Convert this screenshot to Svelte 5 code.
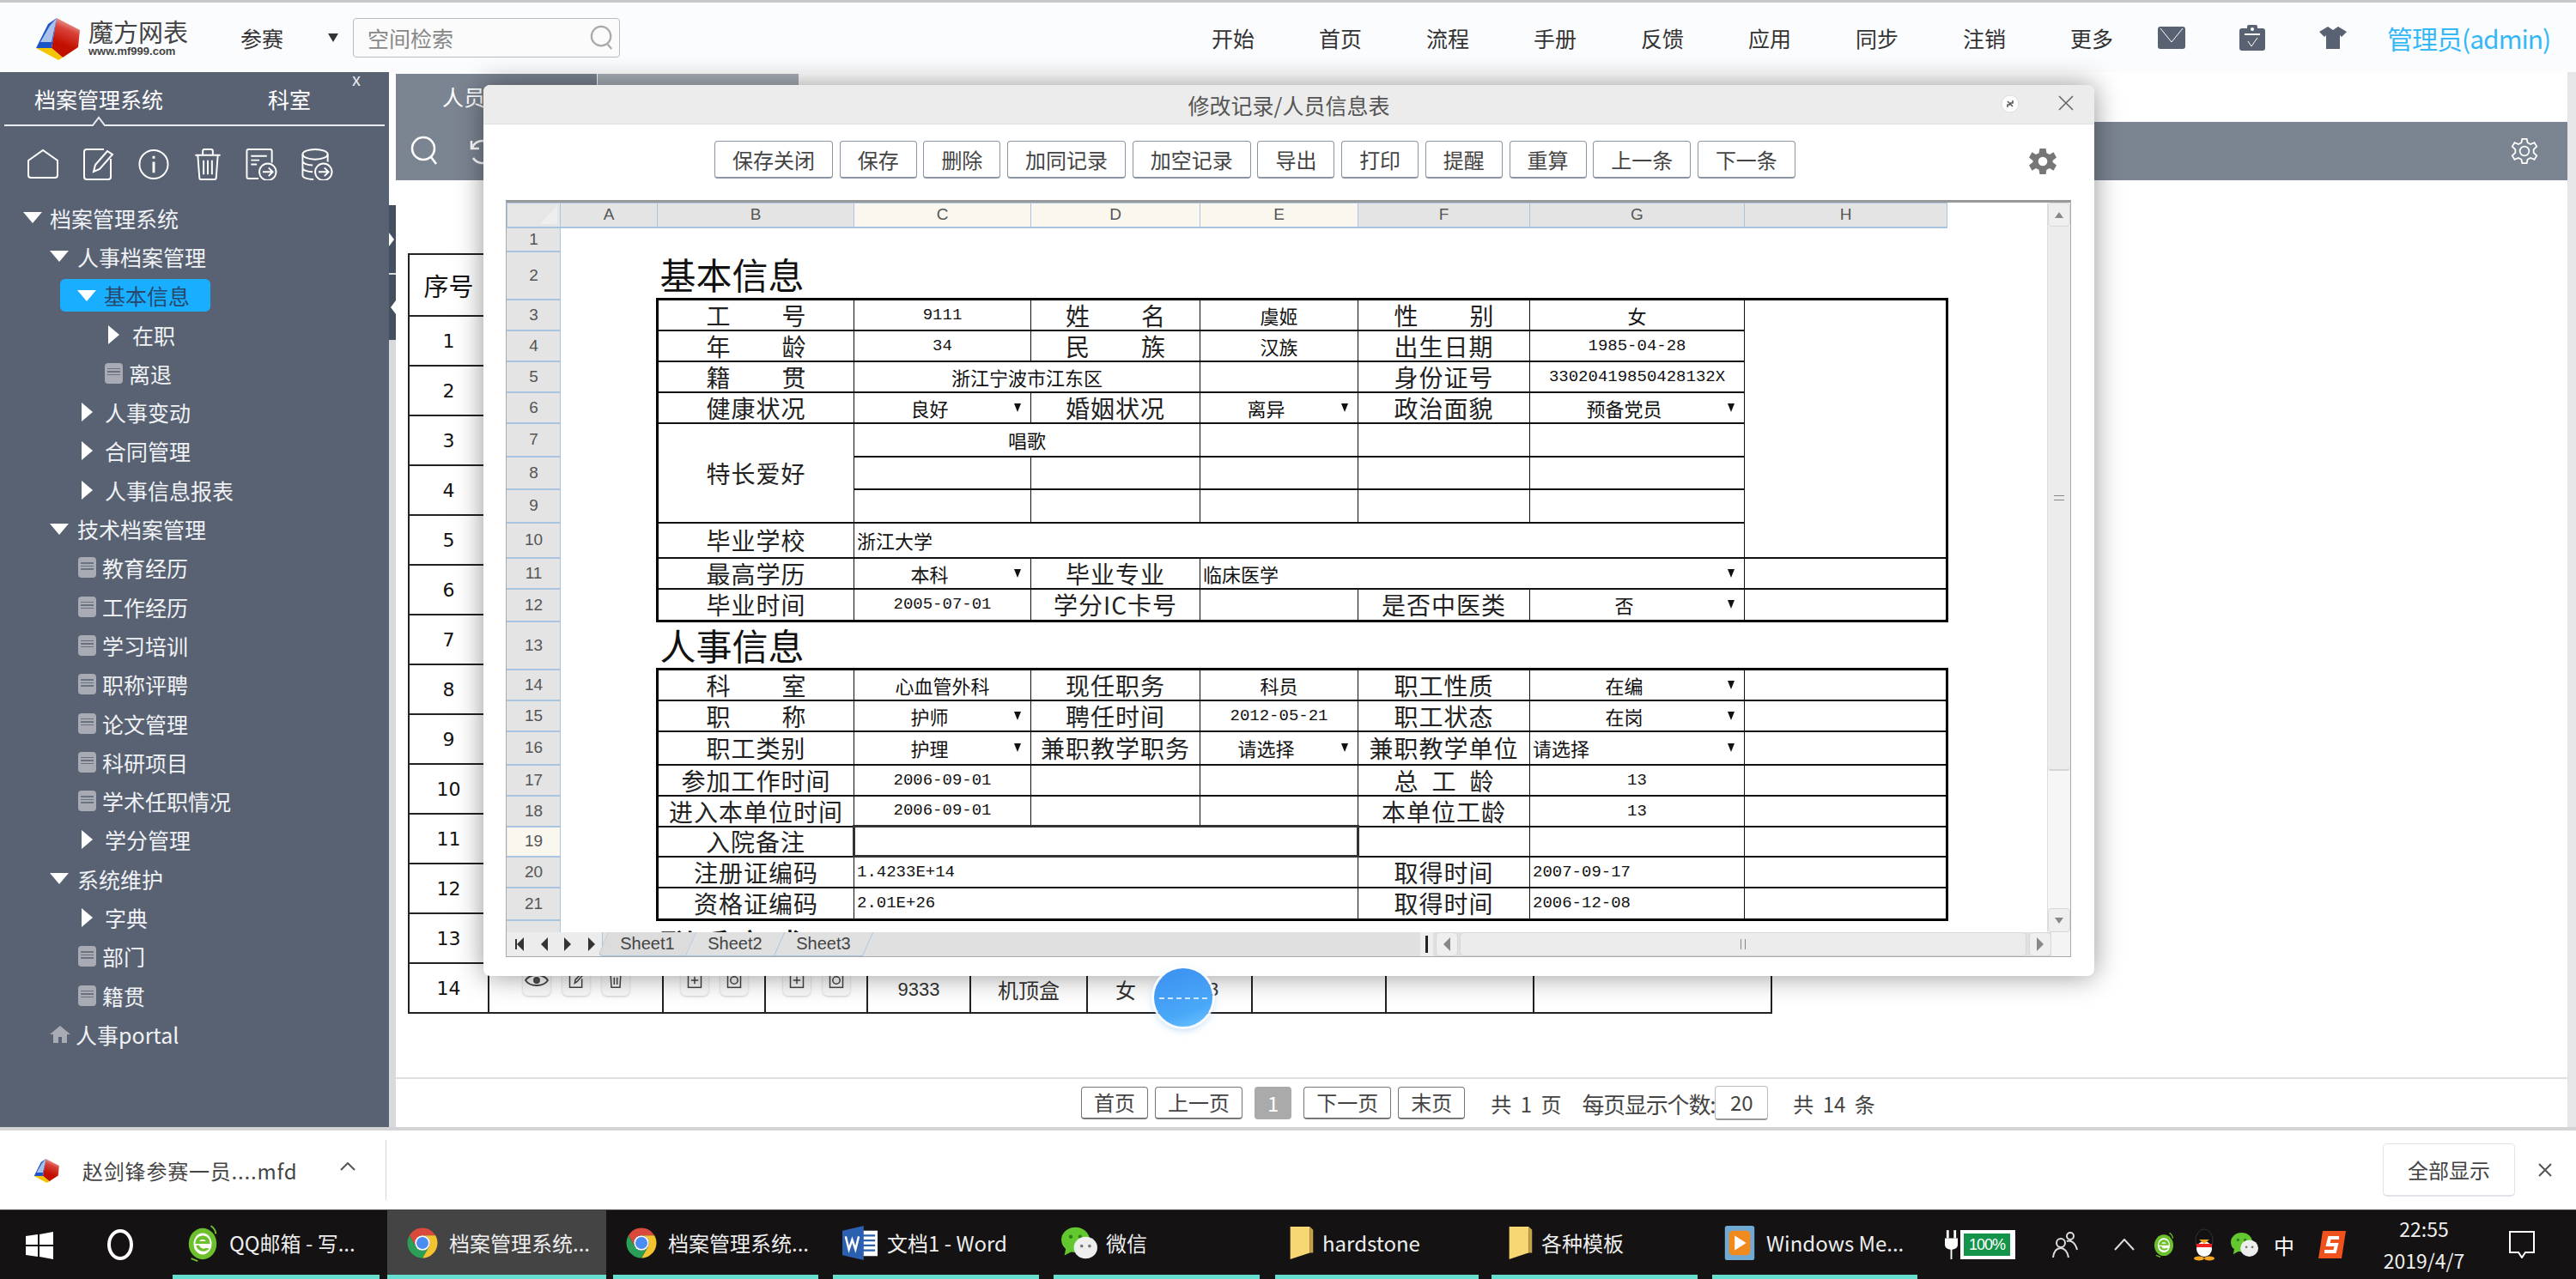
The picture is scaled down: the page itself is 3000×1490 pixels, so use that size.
<script>
  const navItems = ['开始', '首页', '流程', '手册', '反馈', '应用', '同步', '注销', '更多'];

  // pad = where the row's icon starts, gap = space between icon and text
  const tree = [
    { t: '档案管理系统', icon: 'down', pad: 27, gap: 9 },
    { t: '人事档案管理', icon: 'down', pad: 58, gap: 10 },
    { t: '基本信息', icon: 'down', pad: 20, gap: 9, active: true },
    { t: '在职', icon: 'right', pad: 126, gap: 15 },
    { t: '离退', icon: 'doc', pad: 122, gap: 7 },
    { t: '人事变动', icon: 'right', pad: 95, gap: 14 },
    { t: '合同管理', icon: 'right', pad: 95, gap: 14 },
    { t: '人事信息报表', icon: 'right', pad: 95, gap: 14 },
    { t: '技术档案管理', icon: 'down', pad: 58, gap: 10 },
    { t: '教育经历', icon: 'doc', pad: 91, gap: 7 },
    { t: '工作经历', icon: 'doc', pad: 91, gap: 7 },
    { t: '学习培训', icon: 'doc', pad: 91, gap: 7 },
    { t: '职称评聘', icon: 'doc', pad: 91, gap: 7 },
    { t: '论文管理', icon: 'doc', pad: 91, gap: 7 },
    { t: '科研项目', icon: 'doc', pad: 91, gap: 7 },
    { t: '学术任职情况', icon: 'doc', pad: 91, gap: 7 },
    { t: '学分管理', icon: 'right', pad: 95, gap: 14 },
    { t: '系统维护', icon: 'down', pad: 58, gap: 10 },
    { t: '字典', icon: 'right', pad: 95, gap: 14 },
    { t: '部门', icon: 'doc', pad: 91, gap: 7 },
    { t: '籍贯', icon: 'doc', pad: 91, gap: 7 },
    { t: '人事portal', icon: 'home', pad: 58, gap: 6 }
  ];

  const toolButtons = ['保存关闭', '保存', '删除', '加同记录', '加空记录', '导出', '打印', '提醒', '重算', '上一条', '下一条'];

  const columns = [
    { l: 'A', w: 113 }, { l: 'B', w: 229 }, { l: 'C', w: 206, on: true }, { l: 'D', w: 197, on: true },
    { l: 'E', w: 184, on: true }, { l: 'F', w: 200 }, { l: 'G', w: 250 }, { l: 'H', w: 236 }
  ];

  // sheet cell helpers
  const L = (t, o = {}) => ({ t, k: 'label', ...o });
  const S = (t, o = {}) => ({ t, k: 'label', spread: true, ...o });
  const V = (t, o = {}) => ({ t, k: 'value', ...o });
  const N = (t, o = {}) => ({ t, k: 'num', ...o });
  const E = (o = {}) => ({ t: '', k: 'value', ...o });
  const H = (o = {}) => ({ t: '', k: 'value', h: true, ...o });

  const sheetRows = [
    { n: 3, h: 36, edge: 'top', cells: [S('工 号', { first: true }), N('9111'), S('姓 名'), V('虞姬'), S('性 别'), V('女'), H({ rs: 8 })] },
    { n: 4, h: 36, cells: [S('年 龄', { first: true }), N('34'), S('民 族'), V('汉族'), L('出生日期'), N('1985-04-28')] },
    { n: 5, h: 36, cells: [S('籍 贯', { first: true }), V('浙江宁波市江东区', { cs: 2 }), E(), L('身份证号'), N('33020419850428132X')] },
    { n: 6, h: 36, cells: [L('健康状况', { first: true }), V('良好', { dd: true }), L('婚姻状况'), V('离异', { dd: true }), L('政治面貌'), V('预备党员', { dd: true })] },
    { n: 7, h: 39, cells: [L('特长爱好', { rs: 3, first: true }), V('唱歌', { cs: 2 }), E(), E(), E()] },
    { n: 8, h: 38, cells: [E(), E(), E(), E(), E()] },
    { n: 9, h: 39, cells: [E(), E(), E(), E(), E()] },
    { n: 10, h: 41, cells: [L('毕业学校', { first: true }), V('浙江大学', { cs: 5, left: true })] },
    { n: 11, h: 36, cells: [L('最高学历', { first: true }), V('本科', { dd: true }), L('毕业专业'), V('临床医学', { cs: 3, left: true, dd: true }), H()] },
    { n: 12, h: 38, edge: 'bot', cells: [L('毕业时间', { first: true }), N('2005-07-01'), L('学分IC卡号'), E(), L('是否中医类'), V('否', { dd: true }), H()] },
    { n: 14, h: 36, edge: 'top', cells: [S('科 室', { first: true }), V('心血管外科'), L('现任职务'), V('科员'), L('职工性质'), V('在编', { dd: true }), H()] },
    { n: 15, h: 36, cells: [S('职 称', { first: true }), V('护师', { dd: true }), L('聘任时间'), N('2012-05-21'), L('职工状态'), V('在岗', { dd: true }), H()] },
    { n: 16, h: 39, cells: [L('职工类别', { first: true }), V('护理', { dd: true }), L('兼职教学职务'), V('请选择', { dd: true }), L('兼职教学单位'), V('请选择', { dd: true, left: true }), H()] },
    { n: 17, h: 36, cells: [L('参加工作时间', { first: true }), N('2006-09-01'), E(), E(), S('总 工 龄'), N('13'), H()] },
    { n: 18, h: 36, cells: [L('进入本单位时间', { first: true }), N('2006-09-01'), E(), E(), L('本单位工龄'), N('13'), H()] },
    { n: 19, h: 35, on: true, cells: [L('入院备注', { first: true }), E({ cs: 3, sel: true }), E(), E(), H()] },
    { n: 20, h: 36, cells: [L('注册证编码', { first: true }), N('1.4233E+14', { cs: 3, left: true }), L('取得时间'), N('2007-09-17', { left: true }), H()] },
    { n: 21, h: 38, edge: 'bot', cells: [L('资格证编码', { first: true }), N('2.01E+26', { cs: 3, left: true }), L('取得时间'), N('2006-12-08', { left: true }), H()] }
  ];

  const allRows = [
    { n: 1, h: 28, blank: true },
    { n: 2, h: 56, heading: '基本信息' },
    ...sheetRows.slice(0, 10),
    { n: 13, h: 56, heading: '人事信息' },
    ...sheetRows.slice(10),
    { n: 22, h: 40, heading: '联系方式', low: true }
  ];

  const tableCols = [93, 203, 119, 119, 120, 136, 90, 102, 156, 172, 277];
  const rowNumbers = Array.from({ length: 13 }, (_, i) => i + 1);

  const taskItems = [
    { t: 'QQ邮箱 - 写...', icon: 'ie', w: 241, m: 0, pad: 14 },
    { t: '档案管理系统...', icon: 'chrome', w: 255, m: 9, pad: 20, active: true },
    { t: '档案管理系统...', icon: 'chrome', w: 239, m: 8, pad: 12 },
    { t: '文档1 - Word', icon: 'word', w: 240, m: 17, pad: 11 },
    { t: '微信', icon: 'wechat', w: 240, m: 17, pad: 9 },
    { t: 'hardstone', icon: 'folder', w: 237, m: 18, pad: 15 },
    { t: '各种模板', icon: 'folder', w: 240, m: 15, pad: 18 },
    { t: 'Windows Me...', icon: 'wmp', w: 239, m: 17, pad: 11 }
  ];
</script>

{#snippet logo()}
  <svg viewBox="0 0 52 49" width="100%" height="100%">
    <defs>
      <linearGradient id="lg" x1="0.7" y1="0" x2="0.5" y2="0.7">
        <stop offset="0" stop-color="#f3c9c4" />
        <stop offset="0.45" stop-color="#d9433a" />
        <stop offset="1" stop-color="#c21000" />
      </linearGradient>
    </defs>
    <polygon points="25,0 52,14 50,34 32,46 19,35" fill="url(#lg)" />
    <polygon points="25,0 15,7 1,35 19,35" fill="#1d55c8" />
    <polygon points="25,0 17,9 6,28 19,28" fill="#dbe6f4" opacity="0.75" />
    <polygon points="1,35 19,35 32,46 27,49" fill="#f2c500" />
  </svg>
{/snippet}

{#snippet chrome()}
  <svg viewBox="0 0 48 48" class="ti">
    <path d="M6.68 14A20 20 0 0 1 41.32 14H24A10 10 0 0 0 15.34 29Z" fill="#d9493c" />
    <path d="M41.32 14A20 20 0 0 1 24 44L32.66 29A10 10 0 0 0 24 14Z" fill="#f4c430" />
    <path d="M24 44A20 20 0 0 1 6.68 14L15.34 29A10 10 0 0 0 32.66 29Z" fill="#2b9e57" />
    <circle cx="24" cy="24" r="10" fill="#fff" />
    <circle cx="24" cy="24" r="8" fill="#4a8cf0" />
  </svg>
{/snippet}

{#snippet ie(size)}
  <svg viewBox="0 0 40 46" class={size}>
    <ellipse cx="20" cy="24" rx="17" ry="19" fill="#6cc02c" />
    <ellipse cx="20" cy="24" rx="11" ry="13" fill="#fff" />
    <path d="M11 24H29C29 16 24 14 20 14C15 14 11 18 11 24ZM16 21C17 18 23 18 24 21Z" fill="#6cc02c" fill-rule="evenodd" />
    <path d="M12 26C13 33 22 36 28 30L24 29C21 31 17 30 16 26Z" fill="#6cc02c" />
    <path d="M30 2C34 5 36 8 36 12M6 42L14 45" stroke="#6cc02c" stroke-width="2" fill="none" />
  </svg>
{/snippet}

{#snippet word()}
  <svg viewBox="0 0 44 42" class="ti">
    <rect x="20" y="6" width="23" height="31" fill="#fff" />
    <path d="M24 12H40M24 18H40M24 24H40M24 30H40" stroke="#2b5fb0" stroke-width="2.5" />
    <polygon points="0,6 26,0 26,42 0,36" fill="#2b5fb0" />
    <path d="M4 13L8 29L12 17L16 29L20 13" stroke="#fff" stroke-width="2.6" fill="none" />
  </svg>
{/snippet}

{#snippet wechat(size)}
  <svg viewBox="0 0 46 42" class={size}>
    <ellipse cx="18" cy="17" rx="18" ry="16" fill="#63c72f" />
    <path d="M6 27L4 37L15 31Z" fill="#63c72f" />
    <circle cx="12" cy="13" r="2.4" fill="#2e7d18" />
    <circle cx="24" cy="13" r="2.4" fill="#2e7d18" />
    <ellipse cx="31" cy="27" rx="15" ry="14" fill="#eee" />
    <circle cx="26" cy="25" r="2" fill="#777" />
    <circle cx="36" cy="25" r="2" fill="#777" />
  </svg>
{/snippet}

{#snippet folder()}
  <svg viewBox="0 0 30 40" class="ti folder">
    <polygon points="2,0 26,0 26,32 2,40" fill="#f7d774" />
    <polygon points="26,0 30,4 30,32 26,32" fill="#c8a24a" />
  </svg>
{/snippet}

{#snippet wmp()}
  <svg viewBox="0 0 40 46" class="ti">
    <rect x="2" y="2" width="36" height="42" rx="3" fill="#6fa9d4" />
    <rect x="7" y="8" width="26" height="30" rx="5" fill="#f08a1d" />
    <polygon points="14,14 28,23 14,32" fill="#fff" />
  </svg>
{/snippet}

{#snippet arrowDoc()}
  <circle cx="27" cy="28" r="10" />
  <path d="M21 28H33M28 23L33 28L28 33" />
{/snippet}

<div class="page">
  <header class="topbar">
    <div class="logo">{@render logo()}</div>
    <div class="brand">
      <div class="brand-name">魔方网表</div>
      <div class="brand-url">www.mf999.com</div>
    </div>
    <div class="space-select">参赛</div>
    <div class="tri-small"></div>
    <div class="search">
      <span>空间检索</span>
      <svg viewBox="0 0 30 32" width="28" height="30" fill="none" stroke="#aaa" stroke-width="2.4">
        <circle cx="14" cy="14" r="12" /><path d="M22 24L27 30" />
      </svg>
    </div>
    <nav class="nav">
      {#each navItems as item}
        <span class="nav-item">{item}</span>
      {/each}
    </nav>
    <div class="top-icons">
      <svg viewBox="0 0 32 26" width="32" height="26">
        <rect width="32" height="26" rx="3" fill="#596273" />
        <path d="M3 2L16 18L29 2" stroke="#fff" stroke-width="1" fill="none" />
      </svg>
      <svg viewBox="0 0 30 30" width="30" height="30">
        <rect y="4" width="30" height="26" rx="3" fill="#596273" />
        <rect x="9" y="0" width="12" height="9" rx="2" fill="#596273" />
        <circle cx="15" cy="5" r="2" fill="#fff" />
        <rect x="6" y="10" width="18" height="2" fill="#fff" />
        <path d="M10 19L14 25L21 15" stroke="#fff" stroke-width="1" fill="none" />
      </svg>
      <svg viewBox="0 0 32 26" width="32" height="26">
        <path d="M10 0L16 4L22 0L32 6L26 12L24 10V26H8V10L6 12L0 6Z" fill="#596273" />
      </svg>
    </div>
    <a class="admin" href="#top">管理员(admin)</a>
  </header>

  <main class="main">
    <aside class="sidebar">
      <span class="side-close">x</span>
      <div class="side-tabs">
        <span class="side-tab first">档案管理系统</span>
        <span class="side-tab second">科室</span>
      </div>
      <svg class="side-rule" viewBox="0 0 443 12" width="443" height="12" fill="none" stroke="#e8ebf0" stroke-width="2">
        <path d="M0 11H103L110 2L117 11H443" />
      </svg>
      <div class="side-icons">
        <svg viewBox="0 0 38 36" width="38" height="36"><path d="M2 14L19 2L36 14V31a3 3 0 0 1-3 3H5a3 3 0 0 1-3-3Z" /></svg>
        <svg viewBox="0 0 38 37" width="38" height="37">
          <path d="M33 12V33a3 3 0 0 1-3 3H5a3 3 0 0 1-3-3V4a3 3 0 0 1 3-3H25" />
          <path d="M13 27L15 19L29 3L35 7L20 24Z" />
        </svg>
        <svg viewBox="0 0 38 38" width="38" height="37">
          <circle cx="19" cy="19" r="17" /><path d="M19 16V29M19 9V12" stroke-width="3" />
        </svg>
        <svg viewBox="0 0 34 38" width="34" height="37">
          <path d="M2 8H32M11 7V3a2 2 0 0 1 2-2H21a2 2 0 0 1 2 2V7M5 8L7 35a2 2 0 0 0 2 2H25a2 2 0 0 0 2-2L29 8M12 14V31M17 14V31M22 14V31" />
        </svg>
        <svg viewBox="0 0 38 38" width="38" height="37">
          <path d="M16 36H4a2 2 0 0 1-2-2V3a2 2 0 0 1 2-2H30a2 2 0 0 1 2 2V17M7 9H26M7 14H17M7 19H14" />
          {@render arrowDoc()}
        </svg>
        <svg viewBox="0 0 38 38" width="38" height="37">
          <ellipse cx="17" cy="7" rx="15" ry="6" />
          <path d="M2 7V32C2 35 8 37 15 37M32 7V16M2 15C2 18 8 20 14 20M2 23C2 26 8 28 14 28" />
          {@render arrowDoc()}
        </svg>
      </div>
      <ul class="tree">
        {#each tree as row}
          <li class="tree-row" class:active={row.active}>
            <div class="tree-inner" style:padding-left="{row.pad}px">
              {#if row.icon === 'down'}
                <i class="tri-down"></i>
              {:else if row.icon === 'right'}
                <i class="tri-right"></i>
              {:else if row.icon === 'doc'}
                <i class="doc"><b></b><b></b><b></b></i>
              {:else}
                <svg class="home" viewBox="0 0 24 20" width="24" height="20">
                  <path d="M12 0L24 10H20V20H14V13H10V20H4V10H0Z" fill="#a8abb3" />
                </svg>
              {/if}
              <span style:margin-left="{row.gap}px">{row.t}</span>
            </div>
          </li>
        {/each}
      </ul>
    </aside>

    <div class="splitter">
      <div class="split-blank"></div>
      <div class="split-handle"><i class="split-r"></i></div>
      <div class="split-handle lower"><i class="split-l"></i></div>
    </div>

    <section class="content">
      <div class="tabs">
        <div class="tab">人员信息表</div>
        <div class="tab dim"></div>
      </div>
      <div class="list-toolbar">
        <svg viewBox="0 0 36 36" width="36" height="36" fill="none" stroke="#fff" stroke-width="2.6">
          <circle cx="16" cy="15" r="13" /><path d="M25 25L31 33" />
        </svg>
        <svg viewBox="0 0 36 36" width="36" height="36" fill="none" stroke="#fff" stroke-width="2.6">
          <path d="M6 6V15H15M7 14A13 13 0 1 1 8 26" />
        </svg>
        <svg class="list-gear" viewBox="0 0 36 36" width="32" height="34" fill="none" stroke="#fff" stroke-width="2">
          <path d="M15 2H21L22 7L26 9L31 7L34 12L30 16V20L34 24L31 29L26 27L22 29L21 34H15L14 29L10 27L5 29L2 24L6 20V16L2 12L5 7L10 9L14 7Z" />
          <circle cx="18" cy="18" r="6" />
        </svg>
      </div>
      <div class="list-area">
        <table class="data-table">
          <colgroup>
            {#each tableCols as w}<col style:width="{w}px" />{/each}
          </colgroup>
          <tbody>
            <tr class="head-row"><th>序号</th><th colspan="10"></th></tr>
            {#each rowNumbers as n}
              <tr class="data-row"><td>{n}</td><td colspan="10"></td></tr>
            {/each}
            <tr class="data-row last">
              <td>14</td>
              <td>
                <div class="ops">
                  <span class="op"><svg viewBox="0 0 28 20" width="28" height="20"><path d="M1 10C6 2 22 2 27 10C22 18 6 18 1 10Z" /><circle cx="14" cy="10" r="3" fill="#555" /></svg></span>
                  <span class="op"><svg viewBox="0 0 24 24" width="20" height="22"><path d="M20 10V22H3V3H12M10 16L11 11L20 2L22 4L13 14Z" /></svg></span>
                  <span class="op"><svg viewBox="0 0 24 24" width="20" height="22"><path d="M2 4H22M5 4L6 22H18L19 4M10 8V18M14 8V18" /></svg></span>
                </div>
              </td>
              <td>
                <div class="ops">
                  <span class="op"><svg viewBox="0 0 24 24" width="20" height="22"><rect x="3" y="2" width="18" height="20" /><path d="M12 7V17M7 12H17" /></svg></span>
                  <span class="op"><svg viewBox="0 0 24 24" width="20" height="22"><rect x="3" y="2" width="18" height="20" /><circle cx="12" cy="12" r="5" /></svg></span>
                </div>
              </td>
              <td>
                <div class="ops">
                  <span class="op"><svg viewBox="0 0 24 24" width="20" height="22"><rect x="3" y="2" width="18" height="20" /><path d="M12 7V17M7 12H17" /></svg></span>
                  <span class="op"><svg viewBox="0 0 24 24" width="20" height="22"><rect x="3" y="2" width="18" height="20" /><circle cx="12" cy="12" r="5" /></svg></span>
                </div>
              </td>
              <td class="cell-text digits">9333</td>
              <td class="cell-text">机顶盒</td>
              <td class="cell-text">女</td>
              <td class="cell-text digits">33</td>
              <td></td>
              <td></td>
              <td></td>
            </tr>
          </tbody>
        </table>
      </div>
      <div class="pager">
        <span class="pg">首页</span>
        <span class="pg">上一页</span>
        <span class="pg current">1</span>
        <span class="pg">下一页</span>
        <span class="pg">末页</span>
        <span class="pg-text first">共 1 页</span>
        <span class="pg-text second">每页显示个数:</span>
        <span class="pg-input">20</span>
        <span class="pg-text third">共 14 条</span>
      </div>
    </section>
    <div class="right-strip"></div>
  </main>

  <div class="downloads">
    <div class="dl-logo">{@render logo()}</div>
    <span class="dl-name">赵剑锋参赛一员....mfd</span>
    <svg class="dl-caret" viewBox="0 0 18 10" width="18" height="10" fill="none" stroke="#555" stroke-width="2"><path d="M1 9L9 1L17 9" /></svg>
    <div class="dl-sep"></div>
    <button class="dl-all">全部显示</button>
    <svg class="dl-close" viewBox="0 0 16 16" width="16" height="16" stroke="#555" stroke-width="2"><path d="M1 1L15 15M15 1L1 15" /></svg>
  </div>

  <footer class="taskbar">
    <svg class="win" viewBox="0 0 32 32" width="32" height="32" fill="#fff">
      <polygon points="0,5 14,3 14,15 0,15" /><polygon points="16,3 32,0 32,15 16,15" />
      <polygon points="0,17 14,17 14,29 0,27" /><polygon points="16,17 32,17 32,32 16,29" />
    </svg>
    <div class="cortana"></div>
    {#each taskItems as item}
      <div class="task" class:active={item.active} style:width="{item.w}px" style:margin-left="{item.m}px" style:padding-left="{item.pad}px">
        {#if item.icon === 'chrome'}{@render chrome()}
        {:else if item.icon === 'ie'}{@render ie('ti')}
        {:else if item.icon === 'word'}{@render word()}
        {:else if item.icon === 'wechat'}{@render wechat('ti')}
        {:else if item.icon === 'folder'}{@render folder()}
        {:else}{@render wmp()}{/if}
        <span>{item.t}</span>
      </div>
    {/each}
    <div class="tray">
      <svg class="t-plug" viewBox="0 0 16 36" width="15" height="36" fill="#fff">
        <rect x="2" y="0" width="3" height="10" /><rect x="11" y="0" width="3" height="10" />
        <path d="M0 10H16V18C16 22 12 24 9 24V36H7V24C4 24 0 22 0 18Z" />
      </svg>
      <div class="t-bat"><span>100%</span></div>
      <svg class="t-people" viewBox="0 0 30 32" width="30" height="32" fill="none" stroke="#ddd" stroke-width="2">
        <circle cx="10" cy="14" r="5" /><circle cx="21" cy="6" r="4" />
        <path d="M1 31C2 23 6 20 10 20C14 20 18 24 19 31M17 12C22 10 27 14 29 22" />
      </svg>
      <svg class="t-caret" viewBox="0 0 24 14" width="24" height="14" fill="none" stroke="#ddd" stroke-width="2"><path d="M1 13L12 1L23 13" /></svg>
      <div class="t-e">{@render ie('tray-i')}</div>
      <svg class="t-qq" viewBox="0 0 28 38" width="28" height="38">
        <ellipse cx="14" cy="14" rx="10" ry="13" fill="#111" stroke="#333" />
        <ellipse cx="14" cy="24" rx="9" ry="9" fill="#fff" />
        <rect x="5" y="18" width="18" height="4" fill="#e22" />
        <path d="M8 13H20L14 18Z" fill="#f5a623" />
        <ellipse cx="8" cy="35" rx="6" ry="2.5" fill="#f5a623" /><ellipse cx="20" cy="35" rx="6" ry="2.5" fill="#f5a623" />
      </svg>
      <div class="t-wx">{@render wechat('tray-i')}</div>
      <span class="t-ime">中</span>
      <svg class="t-sogou" viewBox="0 0 32 32" width="32" height="32">
        <path d="M5 0H32L27 32H0Z" fill="#f0521e" />
        <path d="M24 8H13L11 16H21L19 24H7" stroke="#fff" stroke-width="4" fill="none" />
      </svg>
      <div class="t-clock"><span>22:55</span><span>2019/4/7</span></div>
      <svg class="t-note" viewBox="0 0 32 32" width="32" height="32" fill="none" stroke="#fff" stroke-width="2"><path d="M2 1H30V25H20L16 31L12 25H2Z" /></svg>
    </div>
  </footer>

  <div class="modal">
    <div class="modal-head">
      <span class="modal-title">修改记录/人员信息表</span>
      <svg class="modal-restore" viewBox="0 0 22 22" width="22" height="22">
        <circle cx="11" cy="11" r="10" fill="#fff" stroke="#ddd" />
        <path d="M8 8L14 14M14 7V10H11M8 15V12H11" stroke="#555" stroke-width="1.5" fill="none" />
      </svg>
      <svg class="modal-x" viewBox="0 0 18 18" width="18" height="18" stroke="#666" stroke-width="1.6"><path d="M1 1L17 17M17 1L1 17" /></svg>
    </div>
    <div class="modal-tools">
      {#each toolButtons as b}
        <button class="tool-btn">{b}</button>
      {/each}
      <svg class="modal-gear" viewBox="0 0 36 36" width="32" height="32" fill="#777">
        <path fill-rule="evenodd" d="M14 1H22L23 7L27 9L32 6L36 13L31 17V19L36 23L32 30L27 27L23 29L22 35H14L13 29L9 27L4 30L0 23L5 19V17L0 13L4 6L9 9L13 7ZM18 12A6 6 0 1 0 18 24A6 6 0 1 0 18 12Z" />
      </svg>
    </div>
    <div class="sheet">
      <div class="sheet-main">
        <div class="sheet-view">
          <table class="grid">
            <colgroup>
              <col class="col-head" />
              {#each columns as c}<col style:width="{c.w}px" />{/each}
            </colgroup>
            <thead>
              <tr class="col-row">
                <th class="corner"><i></i></th>
                {#each columns as c}<th class="col-h" class:on={c.on}>{c.l}</th>{/each}
              </tr>
            </thead>
            <tbody>
              {#each allRows as row}
                <tr style:height="{row.h}px">
                  <th class="row-h" class:on={row.on}>{row.n}</th>
                  {#if row.blank}
                    <td class="plain" colspan="8"></td>
                  {:else if row.heading}
                    <td class="plain"></td>
                    <td class="plain heading" class:low={row.low} colspan="7"><span>{row.heading}</span></td>
                  {:else}
                    <td class="plain"></td>
                    {#each row.cells as c}
                      <td
                        class="cell {c.k}"
                        class:e-top={row.edge === 'top'}
                        class:e-bot={row.edge === 'bot'}
                        class:e-left={c.first}
                        class:e-right={c.h}
                        class:sel={c.sel}
                        colspan={c.cs || 1}
                        rowspan={c.rs || 1}
                      >
                        <div class="cell-in" class:left={c.left}>
                          <span class="cell-t">
                            {#if c.spread}
                              <span class="spread">{#each c.t.split(' ') as part}<span>{part}</span>{/each}</span>
                            {:else}{c.t}{/if}
                          </span>
                          {#if c.dd}<i class="dd"></i>{/if}
                        </div>
                      </td>
                    {/each}
                  {/if}
                </tr>
              {/each}
            </tbody>
          </table>
        </div>
        <div class="vscroll">
          <div class="vbtn"><i class="up"></i></div>
          <div class="vthumb"><b></b></div>
          <div class="vtrack"></div>
          <div class="vbtn"><i class="down"></i></div>
        </div>
      </div>
      <div class="sheet-tabs">
        <div class="tab-nav">
          <i class="first"></i><i class="prev"></i><i class="next"></i><i class="last"></i>
        </div>
        <div class="sheet-tab on"><span>Sheet1</span></div>
        <div class="sheet-tab"><span>Sheet2</span></div>
        <div class="sheet-tab"><span>Sheet3</span></div>
        <div class="hsplit"></div>
        <div class="hbtn"><i class="prev"></i></div>
        <div class="hthumb"><b></b></div>
        <div class="hbtn"><i class="next"></i></div>
        <div class="hcorner"></div>
      </div>
    </div>
  </div>

  <div class="ball"><span></span></div>
</div>

<style>
  :global(body) {
    margin: 0;
    background: #fff;
  }

  .page {
    position: relative;
    width: 3000px;
    height: 1490px;
    overflow: hidden;
    display: flex;
    flex-direction: column;
    font-family: "Noto Sans CJK SC", "Liberation Sans", sans-serif;
    font-size: 25px;
    color: #333;
  }

  /* top bar */
  .topbar {
    height: 84px;
    box-sizing: border-box;
    flex: none;
    display: flex;
    align-items: center;
    background: #fbfcfe;
    border-top: 3px solid #c8c8c8;
    padding-left: 41px;
  }

  .logo {
    width: 52px;
    height: 49px;
    margin-top: 3px;
  }

  .brand {
    margin-left: 10px;
    width: 118px;
  }

  .brand-name {
    font-size: 29px;
    line-height: 32px;
    color: #444;
    white-space: nowrap;
  }

  .brand-url {
    font-family: "Liberation Sans", sans-serif;
    font-size: 13px;
    line-height: 16px;
    font-weight: bold;
    color: #444;
    white-space: nowrap;
  }

  .space-select {
    margin-left: 59px;
    width: 102px;
    color: #333;
  }

  .tri-small {
    width: 0;
    height: 0;
    border-left: 6px solid transparent;
    border-right: 6px solid transparent;
    border-top: 10px solid #333;
  }

  .search {
    margin-left: 17px;
    width: 311px;
    height: 46px;
    box-sizing: border-box;
    border: 1px solid #bbb;
    border-radius: 4px;
    background: #fbfbfb;
    display: flex;
    align-items: center;
    justify-content: space-between;
    padding: 0 6px 0 16px;
    color: #888;
  }

  .nav {
    margin-left: 689px;
    display: flex;
    gap: 75px;
  }

  .nav-item {
    width: 50px;
    white-space: nowrap;
    color: #333;
  }

  .top-icons {
    margin-left: 52px;
    display: flex;
    align-items: center;
    gap: 63px;
  }

  .admin {
    margin-left: 47px;
    font-size: 30px;
    color: #35b8f5;
    text-decoration: none;
    white-space: nowrap;
    letter-spacing: -1px;
  }

  /* main area */
  .main {
    height: 1233px;
    box-sizing: border-box;
    flex: none;
    display: flex;
    border-bottom: 4px solid #d4d4d6;
  }

  .sidebar {
    position: relative;
    flex: none;
    width: 453px;
    background: #596273;
    color: #f2f4f7;
  }

  .side-close {
    position: absolute;
    left: 410px;
    top: -3px;
    font-size: 20px;
    line-height: 22px;
    color: #e8ebf0;
  }

  .side-tabs {
    display: flex;
    height: 41px;
    padding-top: 10px;
    align-items: center;
    color: #fff;
  }

  .side-tab.first {
    margin-left: 40px;
  }

  .side-tab.second {
    margin-left: 122px;
  }

  .side-rule {
    display: block;
    margin-left: 5px;
  }

  .side-icons {
    display: flex;
    gap: 26.5px;
    align-items: center;
    margin-top: 25px;
    padding-left: 31px;
    height: 38px;
  }

  .side-icons svg {
    fill: none;
    stroke: #fff;
    stroke-width: 2;
    flex: none;
  }

  .tree {
    list-style: none;
    margin: 21px 0 0;
    padding: 0;
  }

  .tree-row {
    height: 45.3px;
    display: flex;
    align-items: center;
    white-space: nowrap;
    color: #f0f2f5;
  }

  .tree-inner {
    display: flex;
    align-items: center;
    height: 38px;
  }

  .tree-row.active .tree-inner {
    margin-left: 70px;
    width: 175px;
    box-sizing: border-box;
    background: #19aeff;
    border-radius: 6px;
    color: #27496d;
  }

  .tri-down {
    width: 0;
    height: 0;
    border-left: 11px solid transparent;
    border-right: 11px solid transparent;
    border-top: 13px solid #fff;
    flex: none;
  }

  .tri-right {
    width: 0;
    height: 0;
    border-top: 11px solid transparent;
    border-bottom: 11px solid transparent;
    border-left: 13px solid #fff;
    flex: none;
  }

  .doc {
    width: 21px;
    height: 24px;
    box-sizing: border-box;
    flex: none;
    border-radius: 4px;
    background: #a8abb3;
    padding: 6px 3px 0;
    display: flex;
    flex-direction: column;
    gap: 2px;
  }

  .doc b {
    height: 1.5px;
    background: #6c7380;
  }

  .home {
    flex: none;
  }

  .splitter {
    flex: none;
    width: 8px;
    background: #d9dadd;
    display: flex;
    flex-direction: column;
  }

  .split-blank {
    height: 155px;
    background: #fff;
  }

  .split-handle {
    height: 79px;
    background: #444f5f;
    display: flex;
    align-items: center;
  }

  .split-handle.lower {
    margin-top: 2px;
    height: 76px;
    justify-content: flex-end;
  }

  .split-r {
    border-top: 8px solid transparent;
    border-bottom: 8px solid transparent;
    border-left: 6px solid #fff;
  }

  .split-l {
    border-top: 8px solid transparent;
    border-bottom: 8px solid transparent;
    border-right: 6px solid #fff;
  }

  .content {
    flex: none;
    width: 2529px;
    display: flex;
    flex-direction: column;
    background: #fff;
  }

  .tabs {
    display: flex;
    height: 58px;
    padding-top: 2px;
    box-sizing: border-box;
  }

  .tab {
    width: 234px;
    background: #7b8491;
    color: #fff;
    padding: 8px 0 0 54px;
    box-sizing: border-box;
    white-space: nowrap;
    overflow: hidden;
  }

  .tab.dim {
    margin-left: 1px;
    background: #a9afb8;
  }

  .list-toolbar {
    height: 68px;
    background: #7b8491;
    display: flex;
    align-items: center;
    padding-left: 16px;
    gap: 30px;
  }

  .list-gear {
    margin-left: auto;
    margin-right: 34px;
  }

  .list-area {
    flex: 1;
    min-height: 0;
    padding: 85px 0 0 14px;
    box-sizing: border-box;
    overflow: hidden;
  }

  .data-table {
    border-collapse: collapse;
    table-layout: fixed;
    width: 1587px;
    color: #111;
  }

  .data-table th,
  .data-table td {
    border: 2px solid #222;
    padding: 0;
    text-align: center;
  }

  .head-row {
    height: 72px;
  }

  .head-row th {
    font-size: 29px;
    font-weight: normal;
  }

  .data-row {
    height: 58px;
  }

  .data-row td:first-child {
    font-family: "DejaVu Sans", sans-serif;
    font-size: 22px;
  }

  .data-row.last td.cell-text {
    font-size: 24px;
    line-height: 30px;
    padding-top: 15px;
    vertical-align: top;
    color: #333;
  }

  .data-row.last td.cell-text.digits {
    font-family: "Liberation Sans", sans-serif;
    font-size: 22px;
  }

  .ops {
    display: flex;
    justify-content: center;
    gap: 14px;
    padding-bottom: 8px;
    height: 30px;
    align-items: flex-end;
    margin-top: -5px;
  }

  .op {
    width: 32px;
    height: 36px;
    border-radius: 6px;
    box-shadow: 0 1px 3px rgba(0, 0, 0, 0.2);
    display: flex;
    align-items: center;
    justify-content: center;
    background: #fafafa;
    flex: none;
  }

  .op svg {
    fill: none;
    stroke: #444;
    stroke-width: 1.8;
  }

  .pager {
    height: 58px;
    flex: none;
    box-sizing: border-box;
    border-top: 2px solid #e0e0e0;
    display: flex;
    align-items: center;
    padding: 0 0 0 798px;
    gap: 8px;
    color: #444;
    font-size: 24px;
  }

  .pg {
    height: 38px;
    box-sizing: border-box;
    padding: 0 14px;
    border: 1px solid #777;
    border-bottom-width: 2px;
    border-radius: 4px;
    line-height: 34px;
    white-space: nowrap;
  }

  .pg.current {
    border: none;
    background: #aaa;
    color: #fff;
    padding: 0 15px;
    line-height: 38px;
    margin: 0 6px;
  }

  .pg-text {
    white-space: nowrap;
  }

  .pg-text.first {
    margin-left: 22px;
    word-spacing: 5px;
  }

  .pg-text.second {
    margin-left: 16px;
    margin-right: -8px;
    font-size: 26px;
    letter-spacing: -1.2px;
  }

  .pg-text.third {
    margin-left: 21px;
    word-spacing: 5px;
  }

  .pg-input {
    width: 62px;
    height: 40px;
    box-sizing: border-box;
    border: 1px solid #bbb;
    border-bottom: 2px solid #999;
    border-radius: 4px;
    text-align: center;
    line-height: 36px;
  }

  .right-strip {
    flex: 1;
    background: #e6e6e8;
  }

  /* downloads bar */
  .downloads {
    height: 93px;
    flex: none;
    display: flex;
    align-items: center;
    background: #fff;
    border-bottom: 1px solid #444;
    box-sizing: border-box;
    padding-left: 38px;
  }

  .dl-logo {
    width: 32px;
    height: 28px;
    flex: none;
  }

  .dl-name {
    margin-left: 26px;
    width: 256px;
    white-space: nowrap;
    font-size: 24px;
    letter-spacing: 0.8px;
    color: #444;
  }

  .dl-caret {
    margin-left: 44px;
    margin-top: -8px;
  }

  .dl-sep {
    margin-left: 35px;
    width: 1px;
    height: 70px;
    background: #d5d5d5;
  }

  .dl-all {
    margin-left: 2325px;
    width: 154px;
    height: 62px;
    background: #fff;
    border: 1px solid #e2e2e8;
    border-bottom-width: 2px;
    border-radius: 5px;
    font: inherit;
    font-size: 24px;
    color: #444;
    flex: none;
  }

  .dl-close {
    margin-left: 27px;
    flex: none;
  }

  /* taskbar */
  .taskbar {
    flex: 1;
    display: flex;
    align-items: stretch;
    background: #141212;
    color: #eee;
    min-height: 0;
  }

  .win {
    margin: 25px 0 0 30px;
    flex: none;
  }

  .cortana {
    margin: 22px 0 0 63px;
    width: 30px;
    height: 36px;
    border: 4px solid #fff;
    border-radius: 50%;
    box-sizing: border-box;
    flex: none;
    margin-right: 46px;
  }

  .task {
    box-sizing: border-box;
    flex: none;
    display: flex;
    align-items: center;
    gap: 10px;
    border-bottom: 5px solid #66dfd0;
    white-space: nowrap;
    font-size: 24px;
  }

  .task.active {
    background: #444;
  }

  .ti {
    width: 42px;
    height: 44px;
    flex: none;
  }

  .ti.folder {
    width: 30px;
    height: 38px;
  }

  .tray {
    margin-left: 32px;
    display: flex;
    align-items: center;
    flex: none;
  }

  .t-bat {
    margin-left: 3px;
    width: 64px;
    height: 34px;
    box-sizing: border-box;
    border: 4px solid #fff;
    border-right-width: 6px;
    background: #14944a;
    font-family: "Liberation Sans", sans-serif;
    font-size: 18px;
    line-height: 26px;
    text-align: center;
    letter-spacing: -1px;
    color: #fff;
  }

  .t-people {
    margin-left: 43px;
  }

  .t-caret {
    margin-left: 42px;
  }

  .t-e {
    margin-left: 21px;
    width: 26px;
    height: 34px;
  }

  .t-qq {
    margin-left: 20px;
  }

  .t-wx {
    margin-left: 17px;
    width: 32px;
    height: 32px;
  }

  .tray-i {
    width: 100%;
    height: 100%;
    display: block;
  }

  .t-ime {
    margin-left: 18px;
    width: 24px;
    font-size: 24px;
    color: #fff;
  }

  .t-sogou {
    margin-left: 28px;
  }

  .t-clock {
    margin-left: 36px;
    width: 110px;
    display: flex;
    flex-direction: column;
    align-items: center;
    font-size: 23px;
    line-height: 37px;
    color: #eee;
    white-space: nowrap;
  }

  .t-note {
    margin-left: 43px;
  }

  /* modal */
  .modal {
    position: absolute;
    left: 563px;
    top: 99px;
    width: 1876px;
    height: 1038px;
    background: #fff;
    border-radius: 8px;
    box-shadow: 0 0 32px rgba(0, 0, 0, 0.42);
    display: flex;
    flex-direction: column;
  }

  .modal-head {
    height: 45px;
    flex: none;
    background: #ececec;
    border-radius: 8px 8px 0 0;
    border-bottom: 1px solid #e0e0e0;
    display: flex;
    align-items: center;
    justify-content: center;
    position: relative;
  }

  .modal-title {
    color: #555;
  }

  .modal-restore {
    position: absolute;
    right: 87px;
    top: 11px;
  }

  .modal-x {
    position: absolute;
    right: 24px;
    top: 12px;
  }

  .modal-tools {
    height: 44px;
    margin-top: 19px;
    flex: none;
    display: flex;
    align-items: stretch;
    gap: 7.7px;
    padding-left: 269px;
  }

  .tool-btn {
    font: inherit;
    font-size: 24px;
    line-height: 1;
    color: #444;
    background: #fff;
    border: 1px solid #8c95a3;
    border-bottom-width: 2px;
    border-radius: 4px;
    padding: 0 20px;
    white-space: nowrap;
  }

  .modal-gear {
    margin: 8px 0 0 264px;
  }

  .sheet {
    margin: 25px 27px 0 26px;
    height: 882px;
    border: 1px solid #aaa;
    border-top: 3px solid #999;
    box-sizing: border-box;
    display: flex;
    flex-direction: column;
    background: #fff;
  }

  .sheet-main {
    flex: 1;
    min-height: 0;
    display: flex;
  }

  .sheet-view {
    flex: 1;
    min-width: 0;
    overflow: hidden;
  }

  .grid {
    border-collapse: collapse;
    table-layout: fixed;
    width: 1677px;
    font-family: "Liberation Sans", sans-serif;
    color: #111;
  }

  .col-head {
    width: 62px;
  }

  .col-row {
    height: 28px;
  }

  .corner {
    background: #e6e6e6;
    padding: 0;
    border: 1px solid #a9c4e0;
    border-bottom-width: 2px;
    position: relative;
    overflow: hidden;
  }

  .corner i {
    position: absolute;
    right: 3px;
    bottom: 3px;
    border-left: 20px solid transparent;
    border-bottom: 22px solid #eee;
  }

  .col-h {
    background: #e4e4e4;
    font-weight: normal;
    font-size: 19px;
    line-height: 24px;
    color: #555;
    padding: 0;
    border: 1px solid #a9c4e0;
    border-bottom-width: 2px;
  }

  .col-h.on,
  .row-h.on {
    background: #faf8ee;
  }

  .row-h {
    background: #e4e4e4;
    font-weight: normal;
    font-size: 19px;
    color: #555;
    padding: 0;
    border: 1px solid #e4e4e4;
    border-bottom: 2px solid #a9c4e0;
    border-right: 1px solid #a9c4e0;
  }

  .plain {
    padding: 0;
    border: none;
  }

  .heading {
    font-family: "Noto Sans CJK SC", sans-serif;
    font-size: 42px;
    line-height: 44px;
    vertical-align: middle;
    color: #111;
    white-space: nowrap;
    padding: 0 0 2px 3px;
  }

  .heading.low {
    vertical-align: top;
    padding-top: 6px;
  }

  .cell {
    border: 1px solid #111;
    border-top-width: 2px;
    border-bottom-width: 2px;
    padding: 0;
  }

  .e-top {
    border-top: 3px solid #000;
  }

  .e-bot {
    border-bottom: 3px solid #000;
  }

  .e-left {
    border-left: 3px solid #000;
  }

  .e-right {
    border-right: 3px solid #000;
  }

  .cell.sel {
    border: 3px solid #333;
  }

  .cell-in {
    display: flex;
    align-items: center;
    justify-content: center;
    white-space: nowrap;
  }

  .cell-in.left {
    justify-content: flex-start;
    padding-left: 3px;
  }

  .cell-t {
    flex: 0 1 auto;
  }

  .cell-in:has(.dd) .cell-t {
    flex: 1;
    text-align: center;
  }

  .cell-in.left:has(.dd) .cell-t {
    text-align: left;
  }

  .label {
    font-family: "Noto Sans CJK SC", sans-serif;
    font-size: 28px;
    line-height: 30px;
    letter-spacing: 1px;
    color: #222;
  }

  .spread {
    display: inline-flex;
    justify-content: space-between;
    width: 116px;
    letter-spacing: 0;
  }

  .value {
    font-family: "Noto Sans CJK SC", sans-serif;
    font-size: 22px;
    line-height: 26px;
  }

  .num {
    font-family: "Liberation Mono", monospace;
    font-size: 19px;
    line-height: 26px;
  }

  .dd {
    flex: none;
    width: 30px;
    display: flex;
    justify-content: center;
  }

  .dd::after {
    content: "";
    border-left: 4px solid transparent;
    border-right: 4px solid transparent;
    border-top: 10px solid #111;
  }

  .vscroll {
    flex: none;
    width: 27px;
    display: flex;
    flex-direction: column;
    background: #f4f4f4;
    border-left: 1px solid #ddd;
    box-sizing: border-box;
  }

  .vbtn {
    height: 28px;
    flex: none;
    background: #efefef;
    border: 1px solid #d8d8d8;
    border-radius: 4px;
    display: flex;
    align-items: center;
    justify-content: center;
    box-sizing: border-box;
  }

  .vbtn .up {
    border-left: 5px solid transparent;
    border-right: 5px solid transparent;
    border-bottom: 7px solid #888;
  }

  .vbtn .down {
    border-left: 5px solid transparent;
    border-right: 5px solid transparent;
    border-top: 7px solid #888;
  }

  .vthumb {
    height: 634px;
    flex: none;
    box-sizing: border-box;
    background: #ececec;
    border-bottom: 2px solid #d4d4d4;
    border-radius: 0 0 4px 4px;
    display: flex;
    align-items: center;
    justify-content: center;
  }

  .vthumb b {
    width: 12px;
    height: 4px;
    border-top: 1px solid #888;
    border-bottom: 1px solid #888;
  }

  .vtrack {
    flex: 1;
    background: #f6f6f6;
  }

  .sheet-tabs {
    height: 28px;
    flex: none;
    display: flex;
    align-items: stretch;
    background: #e0e0e0;
    color: #444;
    font-family: "Liberation Sans", sans-serif;
    font-size: 20px;
  }

  .tab-nav {
    width: 112px;
    flex: none;
    display: flex;
    align-items: center;
    justify-content: space-between;
    border-right: 1px solid #a9c4e0;
    box-sizing: border-box;
    background: #ececec;
    padding: 0 8px 0 12px;
  }

  .tab-nav i,
  .hbtn i {
    border-top: 8px solid transparent;
    border-bottom: 8px solid transparent;
  }

  i.first {
    border-right: 8px solid #333;
    box-shadow: -4px 0 0 -2px #333;
  }

  i.prev {
    border-right: 8px solid #333;
  }

  i.next {
    border-left: 8px solid #333;
  }

  i.last {
    border-left: 8px solid #333;
  }

  .sheet-tab {
    width: 103px;
    flex: none;
    text-align: center;
    line-height: 27px;
    border-right: 1px solid #a9c4e0;
    border-bottom: 1px solid #a9c4e0;
    box-sizing: border-box;
    transform: skewX(-24deg);
    white-space: nowrap;
  }

  .sheet-tab span {
    display: inline-block;
    transform: skewX(24deg);
  }

  .sheet-tab.on {
    background: #dcdcdc;
    border-left: 1px solid #c8c8c8;
    border-radius: 0 0 0 6px;
  }

  .hsplit {
    margin-left: 643px;
    width: 15px;
    flex: none;
    background: #eee;
    display: flex;
    justify-content: center;
  }

  .hsplit::after {
    content: "";
    width: 3px;
    margin: 4px 0;
    background: #222;
  }

  .hbtn {
    width: 26px;
    flex: none;
    margin-left: 3px;
    background: #efefef;
    border: 1px solid #d8d8d8;
    border-radius: 5px;
    box-sizing: border-box;
    display: flex;
    align-items: center;
    justify-content: center;
  }

  .hbtn i.prev {
    border-right-color: #888;
  }

  .hbtn i.next {
    border-left-color: #888;
  }

  .hthumb {
    width: 660px;
    flex: none;
    margin-left: 2px;
    background: #ececec;
    border: 1px solid #d8d8d8;
    border-radius: 5px;
    box-sizing: border-box;
    display: flex;
    align-items: center;
    justify-content: center;
  }

  .hthumb b {
    width: 4px;
    height: 12px;
    border-left: 1px solid #888;
    border-right: 1px solid #888;
  }

  .hcorner {
    flex: 1;
    background: #f4f4f4;
  }

  /* floating ball */
  .ball {
    position: absolute;
    left: 1344px;
    top: 1128px;
    width: 68px;
    height: 68px;
    border-radius: 50%;
    background: linear-gradient(160deg, #3a8ff0, #4aa8f8 70%, #6cc4ff);
    box-shadow: 0 0 0 3px rgba(255, 255, 255, 0.85), 0 3px 10px rgba(90, 160, 230, 0.5);
    display: flex;
    align-items: center;
    justify-content: center;
  }

  .ball span {
    width: 56px;
    border-top: 2px dashed #cfe6ff;
    margin-top: 2px;
  }
</style>
